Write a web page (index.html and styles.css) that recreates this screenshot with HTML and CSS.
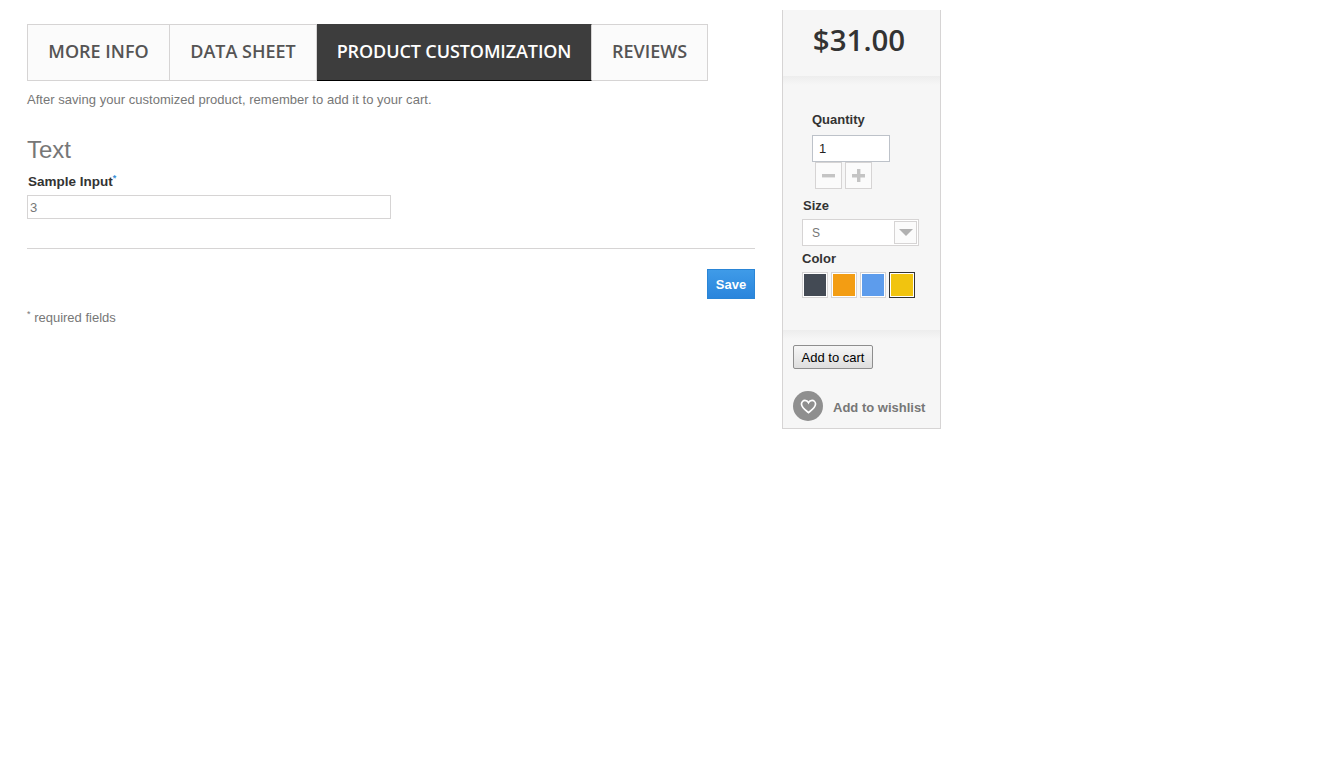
FILE: index.html
```html
<!DOCTYPE HTML>
<html>
  <head>
    <meta charset="utf-8">
    <title>Product customization</title>
    <link rel="stylesheet" href="styles.css">
  </head>
  <body>
    <div class="page">
      <main class="main">
        <ul class="tabs">
          <li class="tab tab-info">More info</li>
          <li class="tab tab-data">Data sheet</li>
          <li class="tab tab-custom active">Product customization</li>
          <li class="tab tab-reviews">Reviews</li>
        </ul>
        <p class="note">After saving your customized product, remember to add it to your cart.</p>
        <h3 class="section-title">Text</h3>
        <label class="field-label">Sample Input<sup>*</sup></label>
        <input class="text-input" type="text" placeholder="3">
        <div class="save-row">
          <button class="save">Save</button>
        </div>
        <p class="required"><sup>*</sup> required fields</p>
      </main>
      <aside class="buy">
        <div class="price">$31.00</div>
        <div class="options">
          <label class="qty-label">Quantity</label>
          <input class="qty" type="text" value="1">
          <div class="steppers">
            <span class="step">
              <svg width="13" height="13" viewBox="0 0 13 13"><rect x="0" y="5" width="13" height="3.4"/></svg>
            </span>
            <span class="step">
              <svg width="13" height="13" viewBox="0 0 13 13"><path d="M5 0h3.4v5H13v3.4H8.400V13H5V8.400H0V5h5z"/></svg>
            </span>
          </div>
          <label class="size-label">Size</label>
          <div class="select">
            <span class="select-value">S</span>
            <span class="select-arrow"><i></i></span>
          </div>
          <label class="color-label">Color</label>
          <div class="swatches">
            <span class="swatch"><i class="slate"></i></span>
            <span class="swatch"><i class="orange"></i></span>
            <span class="swatch"><i class="blue"></i></span>
            <span class="swatch selected"><i class="yellow"></i></span>
          </div>
        </div>
        <div class="actions">
          <button class="add-cart">Add to cart</button>
          <a class="wishlist">
            <span class="heart">
              <svg width="17" height="15" viewBox="0 0 18 16"><path d="M9 14.500C6.500 12.500 1.500 9.300 1.500 5.400 1.500 3.200 3.200 1.500 5.200 1.500 6.800 1.500 8.200 2.400 9 3.900 9.800 2.400 11.200 1.500 12.800 1.500 14.800 1.500 16.500 3.200 16.500 5.400 16.500 9.300 11.500 12.500 9 14.500Z"/></svg>
            </span>
            <span class="wishlist-text">Add to wishlist</span>
          </a>
        </div>
      </aside>
    </div>
  </body>
</html>
```

FILE: styles.css
```css
* { box-sizing: border-box; }
body {
  margin: 0;
  background: #fff;
  font-family: "Liberation Sans", Arial, sans-serif;
  font-size: 13px;
  color: #777;
}
.page {
  display: flex;
  align-items: flex-start;
  padding: 10px 0 0 27px;
}

/* left column */
.main {
  width: 728px;
  padding-top: 14px;
}
.tabs {
  display: flex;
  list-style: none;
  margin: 0;
  padding: 0;
}
.tab {
  height: 57px;
  border: 1px solid #d6d4d4;
  border-left: 0;
  background: #fbfbfb;
  color: #555454;
  font: 600 18px/53px "Open Sans", sans-serif;
  text-align: center;
  text-transform: uppercase;
}
.tab:first-child { border-left: 1px solid #d6d4d4; }
.tab-info { width: 143px; }
.tab-data { width: 147px; }
.tab-custom { width: 275px; }
.tab-reviews { width: 116px; }
.tab.active {
  background: #3d3d3d;
  border-top-color: #3d3d3d;
  border-bottom-color: #000;
  border-right-color: #d6d4d4;
  color: #fff;
  letter-spacing: -.1px;
}
.note {
  margin: 11px 0 0;
  line-height: 16px;
  letter-spacing: .03px;
}
.section-title {
  margin: 27px 0 0;
  font-size: 24px;
  font-weight: 400;
  line-height: 30px;
  color: #777;
}
.field-label {
  display: block;
  margin: 7px 0 0 1px;
  height: 19px;
  font-size: 13.500px;
  font-weight: 700;
  line-height: 20px;
  color: #333;
}
sup {
  font-size: 9px;
  line-height: 0;
}
.field-label sup { color: #3a8fd8; }
.text-input {
  display: block;
  width: 364px;
  height: 24px;
  margin-top: 4px;
  padding: 0 2px;
  border: 1px solid #d6d4d4;
  font: 13px "Liberation Sans", Arial, sans-serif;
}
.text-input::placeholder { color: #777; opacity: 1; }
.save-row {
  display: flex;
  justify-content: flex-end;
  margin-top: 29px;
  padding-top: 20px;
  border-top: 1px solid #d6d4d4;
}
.save {
  width: 48px;
  height: 30px;
  padding: 0;
  border: 1px solid #2a85d6;
  background: linear-gradient(#3f9be8, #2a85dc);
  color: #fff;
  font: 700 13px "Liberation Sans", Arial, sans-serif;
}
.required {
  margin: 11px 0 0;
  line-height: 16px;
}

/* right column */
.buy {
  width: 159px;
  margin-left: 27px;
  background: #f6f6f6;
  border: 1px solid #d6d4d4;
  border-top: 0;
}
.price {
  height: 66px;
  padding: 10px 0 0 0;
  text-align: center;
  margin-right: 5px;
  font: 600 29.500px/39px "Open Sans", sans-serif;
  color: #333;
}
.options {
  height: 254px;
  padding: 36px 0 0 19px;
  background: linear-gradient(#ededed, #f6f6f6 9px);
  color: #333;
}
.options label {
  display: block;
  font-size: 13px;
  font-weight: 700;
  line-height: 16px;
  color: #333;
}
.qty-label { margin-left: 10px; }
.qty {
  display: block;
  width: 78px;
  height: 27px;
  margin: 7px 0 0 10px;
  padding: 0 6px;
  border: 1px solid #bdc2c9;
  background: #fff;
  color: #222;
  font: 13px "Liberation Sans", Arial, sans-serif;
}
.steppers {
  display: flex;
  gap: 3px;
  margin: 0 0 0 13px;
}
.step {
  display: flex;
  align-items: center;
  justify-content: center;
  width: 27px;
  height: 27px;
  border: 1px solid #d6d4d4;
  background: #fbfbfb;
  fill: #c4c4c4;
}
.options .size-label { margin: 9px 0 0 1px; }
.select {
  display: flex;
  justify-content: space-between;
  align-items: center;
  width: 117px;
  height: 27px;
  margin-top: 5px;
  padding: 0 1px 0 9px;
  border: 1px solid #d6d4d4;
  background: #fff;
}
.select-value {
  font-size: 12px;
  color: #777;
}
.select-arrow {
  display: flex;
  align-items: center;
  justify-content: center;
  width: 23px;
  height: 23px;
  border: 1px solid #d6d4d4;
  background: #fbfbfb;
}
.select-arrow i {
  border: 7px solid transparent;
  border-top: 7px solid #b0b0b0;
  border-bottom: 0;
}
.options .color-label { margin-top: 5px; }
.swatches {
  display: flex;
  gap: 3px;
  margin-top: 5px;
}
.swatch {
  width: 26px;
  height: 26px;
  padding: 1px;
  border: 1px solid #d6d4d4;
  background: #fff;
}
.swatch.selected { border-color: #333; }
.swatch i {
  display: block;
  width: 100%;
  height: 100%;
}
.slate { background: #434a54; }
.orange { background: #f39d13; }
.blue { background: #5d9cec; }
.yellow { background: #f1c40f; }
.actions {
  height: 98px;
  padding: 15px 0 0 10px;
  background: linear-gradient(#ededed, #f6f6f6 9px);
}
.add-cart {
  display: block;
  width: 80px;
  height: 24px;
  padding: 0;
  border: 1px solid #8e8e8e;
  border-radius: 2px;
  background: linear-gradient(#f6f6f6, #dedede);
  color: #000;
  font: 13px "Liberation Sans", Arial, sans-serif;
}
.wishlist {
  display: flex;
  align-items: center;
  gap: 10px;
  margin-top: 22px;
  font-size: 13px;
  font-weight: 700;
  white-space: nowrap;
  color: #777;
}
.wishlist-text { margin-top: 2px; }
.heart {
  display: flex;
  align-items: center;
  justify-content: center;
  width: 30px;
  height: 30px;
  border-radius: 50%;
  background: #8f8f8f;
}
.heart svg {
  fill: none;
  stroke: #fff;
  stroke-width: 1.800;
}
```
